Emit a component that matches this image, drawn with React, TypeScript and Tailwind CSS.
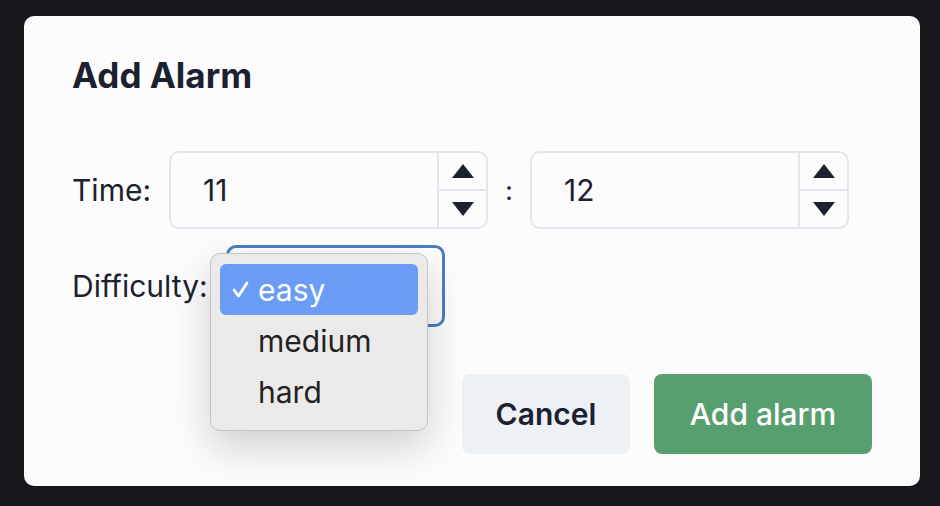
import React from 'react';

function Spinner() {
  return (
    <div className="flex w-[49px] flex-col border-l-2 border-[#e2e6ee]">
      <div className="flex flex-1 items-center justify-center border-b-2 border-[#e2e6ee]">
        <svg width="22" height="14" viewBox="0 0 22 14">
          <polygon points="11,0 22,14 0,14" fill="#1c2130" />
        </svg>
      </div>
      <div className="flex flex-1 items-center justify-center">
        <svg width="22" height="14" viewBox="0 0 22 14">
          <polygon points="0,0 22,0 11,14" fill="#1c2130" />
        </svg>
      </div>
    </div>
  );
}

function NumberBox({ value }: { value: string }) {
  return (
    <div className="flex h-[78px] w-[319px] overflow-hidden rounded-[10px] border-2 border-[#e2e6ee] bg-[#fcfcfd]">
      <div className="flex flex-1 items-center pl-[32px] text-[30px] text-[#1c2130]">{value}</div>
      <Spinner />
    </div>
  );
}

const options = ['easy', 'medium', 'hard'];

export default function App() {
  return (
    <div className="h-[506px] w-[940px] bg-[#16171b] pt-[16px] pl-[24px]" style={{ fontFamily: 'Inter, "Noto Sans", sans-serif' }}>
      <div className="relative flex h-[470px] w-[896px] flex-col rounded-[10px] bg-[#fcfcfd] pt-[41px] pr-[48px] pl-[48px] text-[#1c2130]">
        <h2 className="text-[35px] leading-[36px] font-bold">Add Alarm</h2>

        <div className="mt-[58px] flex items-center">
          <span className="w-[97px] text-[30px]">Time:</span>
          <NumberBox value="11" />
          <span className="w-[42px] text-center text-[26px]">:</span>
          <NumberBox value="12" />
        </div>

        <div className="mt-[16px] flex items-center">
          <span className="w-[154px] text-[30px]">Difficulty:</span>
          <div className="relative h-[82px] w-[219px] rounded-[10px] border-[3px] border-[#4a7ec0]">
            <div className="absolute top-[5px] left-[-19px] z-10 w-[218px] rounded-[10px] border border-[#c4c4c4] bg-[#ebeae8] px-[9px] pt-[10px] pb-[13px] shadow-[0_16px_40px_rgba(0,0,0,0.18)]">
              {options.map((o, i) => (
                <div
                  key={o}
                  className={
                    i === 0
                      ? 'flex h-[51px] items-center rounded-[6px] bg-[#6a9cf5] text-white'
                      : 'flex h-[51px] items-center text-[#222222]'
                  }
                >
                  <span className="flex w-[38px] justify-end pr-[9px]">
                    {i === 0 && (
                      <svg width="17" height="17" viewBox="0 0 17 17">
                        <polyline points="2,9 6.5,15 15,2" fill="none" stroke="white" strokeWidth="2.8" strokeLinecap="round" strokeLinejoin="round" />
                      </svg>
                    )}
                  </span>
                  <span className="text-[30px] leading-none">{o}</span>
                </div>
              ))}
            </div>
          </div>
        </div>

        <div className="mt-[47px] flex justify-end gap-[24px]">
          <button className="h-[80px] w-[168px] rounded-[8px] bg-[#edf0f5] text-[30px] font-semibold text-[#1c2130]">Cancel</button>
          <button className="h-[80px] w-[218px] rounded-[8px] bg-[#579f6e] text-[30px] font-medium text-white">Add alarm</button>
        </div>
      </div>
    </div>
  );
}
